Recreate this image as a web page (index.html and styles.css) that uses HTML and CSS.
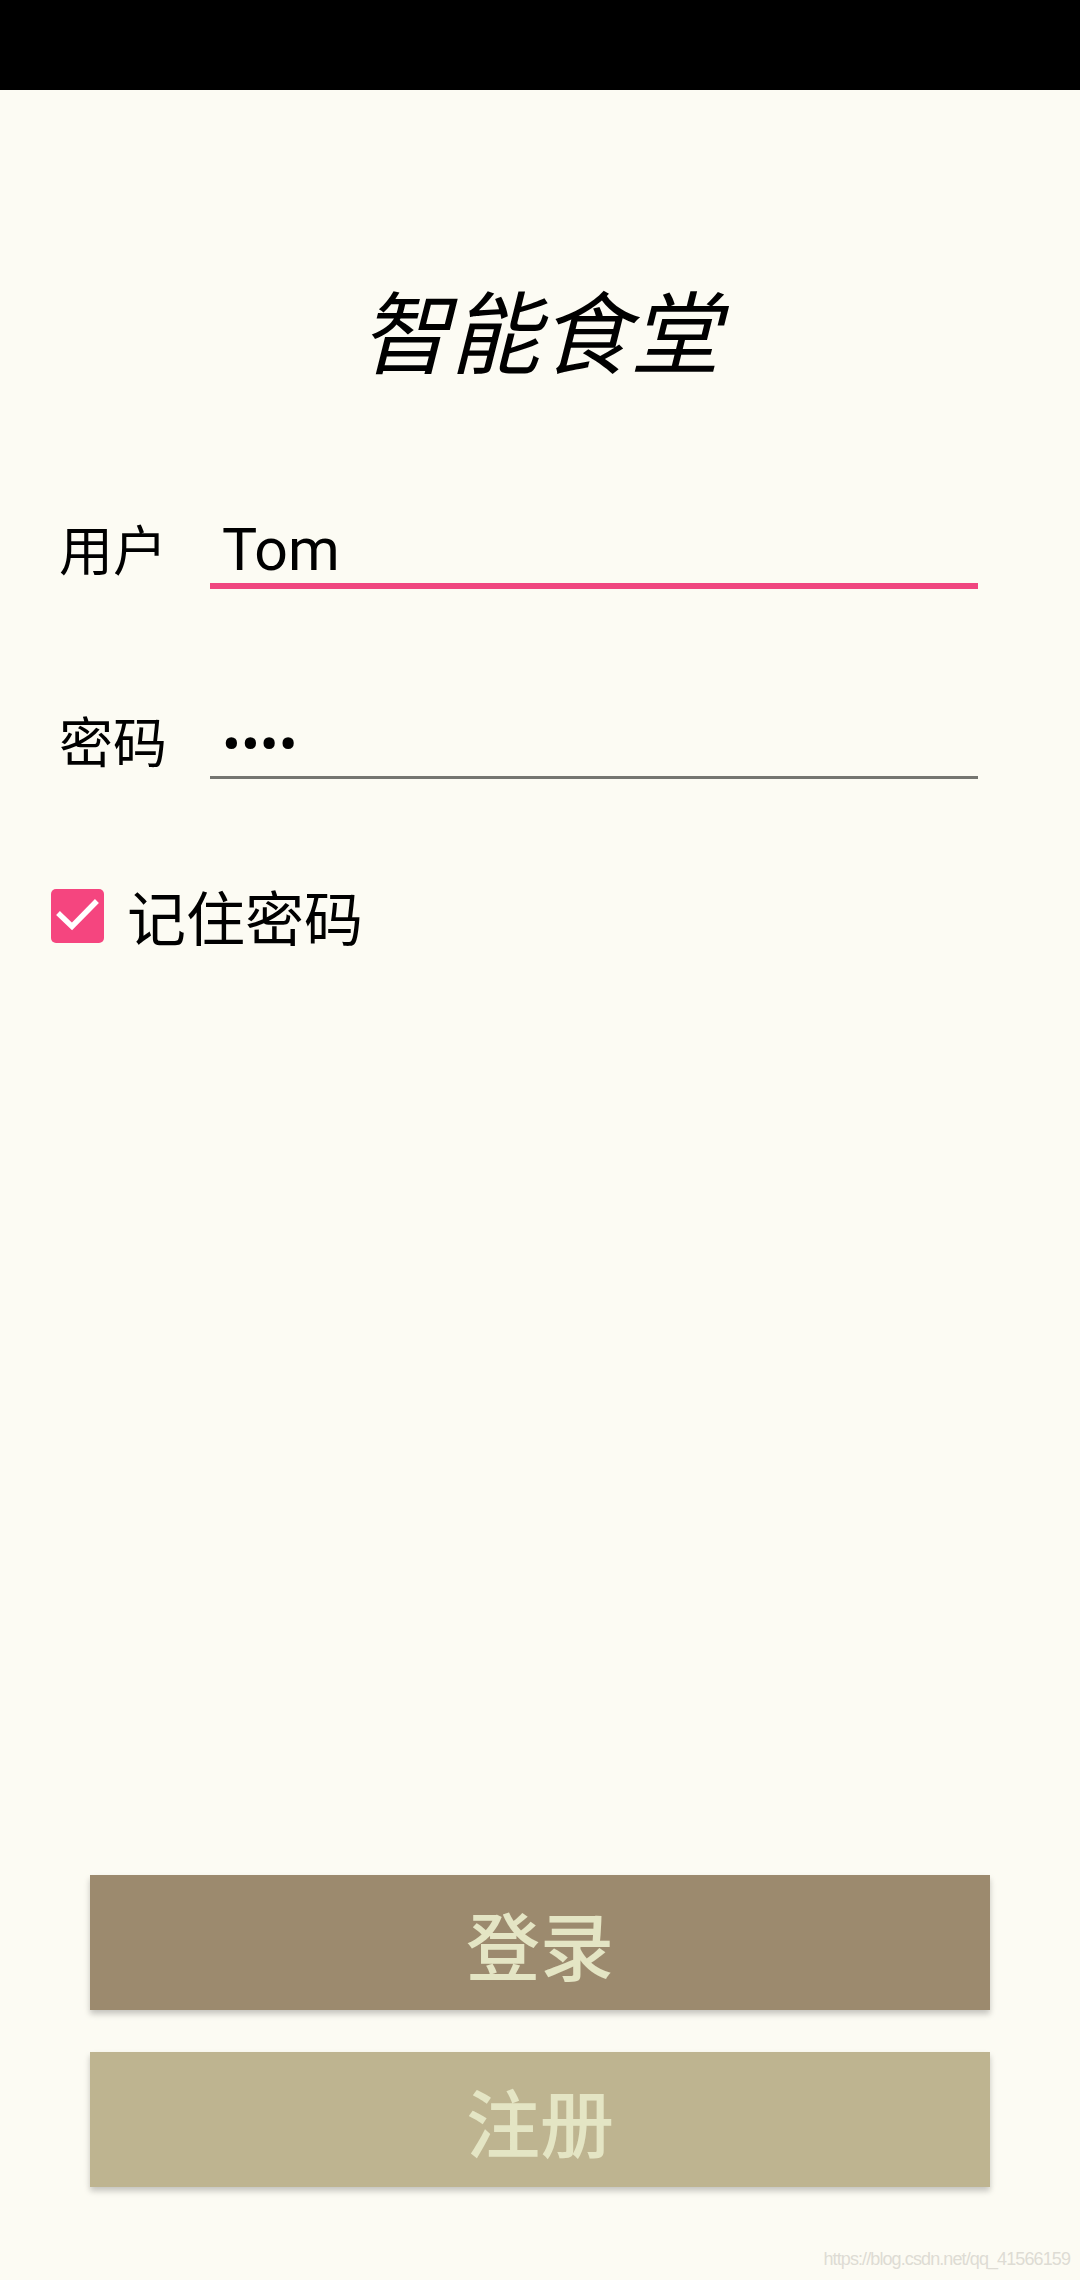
FILE: index.html
```html
<!DOCTYPE html>
<html lang="zh-CN">
<head>
<meta charset="utf-8">
<title>智能食堂</title>
<link rel="stylesheet" href="styles.css">
</head>
<body>
<div class="screen">
  <div class="status-bar"></div>
  <main class="content">
    <h1 class="title">智能食堂</h1>
    <div class="row row-user">
      <span class="label">用户</span>
      <div class="field field-focused"><span class="value">Tom</span></div>
    </div>
    <div class="row row-pass">
      <span class="label">密码</span>
      <div class="field"><span class="value dots">••••</span></div>
    </div>
    <label class="remember">
      <span class="checkbox">
        <svg width="53" height="54" viewBox="0 0 53 54"><path d="M9 26 L21 37.5 L44 14" fill="none" stroke="#ffffff" stroke-width="5.5" stroke-linecap="square" stroke-linejoin="miter"/></svg>
      </span>
      <span class="remember-text">记住密码</span>
    </label>
    <div class="spacer"></div>
    <div class="buttons">
      <button class="btn btn-login">登录</button>
      <button class="btn btn-register">注册</button>
    </div>
    <div class="watermark">https://blog.csdn.net/qq_41566159</div>
  </main>
</div>
</body>
</html>
```

FILE: styles.css
```css
html, body {
  margin: 0;
  padding: 0;
  background: #fcfbf3;
}
body {
  font-family: "Noto Sans CJK SC", "Noto Sans", sans-serif;
  color: #000;
}
.screen {
  width: 1080px;
  height: 2280px;
  display: flex;
  flex-direction: column;
  background: #fcfbf3;
  overflow: hidden;
}
.status-bar {
  height: 90px;
  background: #000;
  flex: none;
}
.content {
  flex: 1;
  display: flex;
  flex-direction: column;
}
.title {
  margin: 193px 0 0 0;
  font-size: 90px;
  line-height: 90px;
  font-weight: 400;
  font-style: italic;
  text-align: center;
  font-family: "Noto Sans CJK SC", sans-serif;
}
.row {
  display: flex;
  align-items: center;
  padding-left: 59px;
}
.row-user { margin-top: 144px; }
.row-pass { margin-top: 121px; }
.label {
  width: 151px;
  font-size: 54px;
  line-height: 54px;
  margin-bottom: 10px;
  font-family: "Noto Sans CJK SC", sans-serif;
}
.field {
  width: 756px;
  height: 66px;
  padding-left: 12px;
  border-bottom: 3px solid #757570;
  display: flex;
  align-items: center;
}
.field-focused {
  border-bottom: 6px solid #f0467f;
}
.value {
  font-family: Roboto, "Noto Sans", sans-serif;
  font-size: 59px;
  line-height: 66px;
  color: #000;
}
.dots {
  font-size: 56px;
  margin-top: 4px;
}
.remember {
  display: flex;
  align-items: center;
  margin-top: 107px;
  padding-left: 51px;
}
.checkbox {
  width: 53px;
  height: 54px;
  border-radius: 5px;
  background: #f5457f;
  display: flex;
  flex: none;
}
.remember-text {
  margin-left: 23px;
  font-size: 59px;
  line-height: 59px;
  font-family: "Noto Sans CJK SC", sans-serif;
}
.spacer { flex: 1; }
.buttons {
  display: flex;
  flex-direction: column;
  gap: 42px;
  padding: 0 90px;
}
.btn {
  height: 135px;
  border: none;
  border-radius: 0;
  margin: 0;
  padding: 0;
  font-family: "Noto Sans CJK SC", sans-serif;
  font-size: 74px;
  line-height: 74px;
  font-weight: 500;
  color: #e4e5c4;
  box-shadow: 0 4px 6px rgba(0, 0, 0, 0.22);
  display: flex;
  align-items: center;
  justify-content: center;
}
.btn-login { background: #9c8a6e; }
.btn-register { background: #beb490; }
.watermark {
  margin-top: 62px;
  height: 31px;
  text-align: right;
  padding-right: 10px;
  font-family: "Liberation Sans", sans-serif;
  font-size: 18px;
  letter-spacing: -0.9px;
  color: #dedcd4;
}
```
